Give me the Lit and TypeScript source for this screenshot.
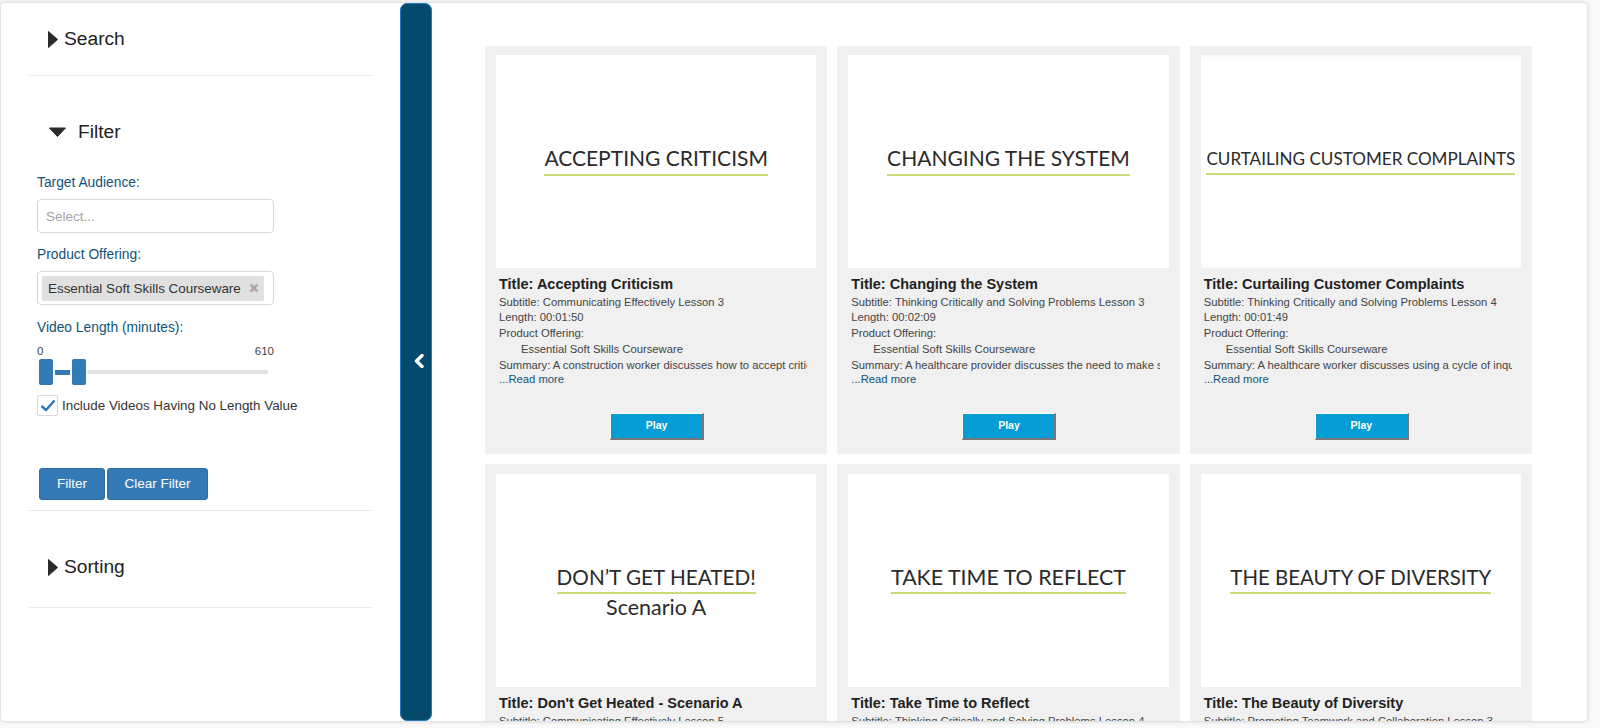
import { LitElement, html, css, nothing } from 'lit';
import { customElement } from 'lit/decorators.js';

interface Video {
  poster: string;
  scenario?: string;
  fontSize: number;
  gap: number;
  letterbox?: boolean;
  title: string;
  subtitle: string;
  length: string;
  summary: string;
}

const VIDEOS: Video[] = [
  {
    poster: 'ACCEPTING CRITICISM',
    fontSize: 21,
    gap: 3,
    title: 'Accepting Criticism',
    subtitle: 'Communicating Effectively Lesson 3',
    length: '00:01:50',
    summary: 'A construction worker discusses how to accept criticism from a supervisor on the job.',
  },
  {
    poster: 'CHANGING THE SYSTEM',
    fontSize: 21,
    gap: 3,
    title: 'Changing the System',
    subtitle: 'Thinking Critically and Solving Problems Lesson 3',
    length: '00:02:09',
    summary: 'A healthcare provider discusses the need to make system changes in the workplace.',
  },
  {
    poster: 'CURTAILING CUSTOMER COMPLAINTS',
    fontSize: 17.1,
    gap: 1,
    letterbox: true,
    title: 'Curtailing Customer Complaints',
    subtitle: 'Thinking Critically and Solving Problems Lesson 4',
    length: '00:01:49',
    summary: 'A healthcare worker discusses using a cycle of inquiry to reduce complaints.',
  },
  {
    poster: 'DON’T GET HEATED!',
    scenario: 'Scenario A',
    fontSize: 20.7,
    gap: 2,
    title: "Don't Get Heated - Scenario A",
    subtitle: 'Communicating Effectively Lesson 5',
    length: '00:01:30',
    summary: '',
  },
  {
    poster: 'TAKE TIME TO REFLECT',
    fontSize: 21.4,
    gap: 2,
    title: 'Take Time to Reflect',
    subtitle: 'Thinking Critically and Solving Problems Lesson 4',
    length: '00:01:30',
    summary: '',
  },
  {
    poster: 'THE BEAUTY OF DIVERSITY',
    fontSize: 20.4,
    gap: 2,
    title: 'The Beauty of Diversity',
    subtitle: 'Promoting Teamwork and Collaboration Lesson 3',
    length: '00:01:30',
    summary: '',
  },
];

@customElement('app-root')
export class AppRoot extends LitElement {
  static styles = css`
    :host {
      display: block;
      height: 728px;
      overflow: hidden;
      background: #f9f9f9;
      font-family: 'Liberation Sans', Arial, sans-serif;
      color: #333;
    }

    .window {
      display: flex;
      height: 718px;
      margin: 3px 13px 0 1px;
      background: #fff;
      border-radius: 4px;
      box-shadow: 0 0 4px rgba(0, 0, 0, 0.22);
      overflow: hidden;
    }

    /* ===== Sidebar ===== */
    .sidebar {
      flex: 0 0 399px;
      box-sizing: border-box;
      padding: 0 28px;
    }

    .section {
      width: 343px;
      border-bottom: 1px solid #e9e9e9;
    }

    .section--search { height: 73px; padding-top: 24px; box-sizing: border-box; }
    .section--filter { padding: 44px 0 10px; }
    .section--sorting { height: 97px; padding-top: 44px; box-sizing: border-box; }

    .heading {
      display: flex;
      align-items: center;
      height: 24px;
      padding-left: 19px;
      font-size: 19.2px;
      color: #222;
    }

    .heading svg { flex: none; margin-right: 6px; }
    .heading--open { padding-left: 20px; }
    .heading--open svg { margin-right: 12px; }

    .form { padding-left: 8px; }

    .label {
      height: 20px;
      line-height: 20px;
      font-size: 13.8px;
      color: #0f5578;
    }

    .label--first { margin-top: 29px; }
    .label--next { margin-top: 12px; }
    .label--slider { margin-top: 13px; }

    .box {
      display: flex;
      align-items: center;
      box-sizing: border-box;
      width: 237px;
      height: 34px;
      margin-top: 6px;
      border: 1px solid #d9d9d9;
      border-radius: 4px;
      background: #fff;
    }

    .placeholder {
      padding-left: 8px;
      font-size: 13.5px;
      color: #a3a3a3;
    }

    .tag {
      display: flex;
      align-items: center;
      justify-content: space-between;
      box-sizing: border-box;
      width: 222px;
      height: 25px;
      margin-left: 4px;
      padding: 0 5px 0 6px;
      background: #e0e0e0;
      border-radius: 2px;
      font-size: 13.4px;
      color: #333;
    }

    .ticks {
      display: flex;
      justify-content: space-between;
      width: 237px;
      height: 14px;
      margin-top: 6px;
      line-height: 14px;
      font-size: 11.5px;
      color: #444;
    }

    .slider {
      display: flex;
      align-items: center;
      height: 26px;
      margin: 1px 0 0 2px;
    }

    .handle {
      flex: none;
      box-sizing: border-box;
      width: 13.5px;
      height: 26px;
      background: #337ab7;
      border-radius: 2px;
    }

    .connect {
      flex: none;
      width: 15.5px;
      height: 5px;
      margin: 0 2px;
      background: #337ab7;
    }

    .track {
      flex: none;
      width: 181px;
      height: 4px;
      margin-left: 1px;
      background: #e2e2e2;
      border-radius: 2px;
    }

    .check {
      display: flex;
      align-items: center;
      height: 21px;
      margin-top: 10px;
      font-size: 13.4px;
      color: #333;
    }

    .check-box {
      display: flex;
      align-items: center;
      justify-content: center;
      box-sizing: border-box;
      width: 21px;
      height: 21px;
      margin-right: 4px;
      border: 1px solid #d9d9d9;
      border-radius: 2px;
    }

    .actions {
      display: flex;
      gap: 2px;
      margin: 52px 0 0 2px;
    }

    .btn {
      box-sizing: border-box;
      height: 32px;
      padding: 0 0 2px;
      border: 1px solid #2e6da4;
      border-radius: 3px;
      background: #337ab7;
      font: 13.5px 'Liberation Sans', Arial, sans-serif;
      color: #fff;
    }

    .btn--filter { width: 66px; }
    .btn--clear { width: 101px; }

    /* ===== Collapse bar ===== */
    .toggle {
      flex: 0 0 32px;
      display: flex;
      align-items: center;
      justify-content: center;
      box-sizing: border-box;
      height: 718px;
      padding: 0 0 3px 6px;
      background: #054a6c;
      border: 1.5px solid #1a7cc0;
      border-radius: 7px;
    }

    /* ===== Video grid ===== */
    .main {
      flex: 1;
      min-width: 0;
      overflow: hidden;
      padding: 43px 55px 0 53px;
    }

    .grid {
      display: grid;
      grid-template-columns: repeat(3, 1fr);
      grid-auto-rows: 408px;
      gap: 10px;
    }

    .card {
      display: flex;
      flex-direction: column;
      box-sizing: border-box;
      min-width: 0;
      padding: 9px 11px 14px;
      background: #f0f0f0;
    }

    .card:nth-child(n + 4) { padding-top: 10px; }

    .poster {
      flex: none;
      display: grid;
      grid-template-rows: 1fr auto 1fr;
      justify-items: center;
      box-sizing: border-box;
      height: 213px;
      padding-bottom: 3px;
      background: #fff;
      font-family: Lato, 'Liberation Sans', sans-serif;
      color: #2a2a2a;
    }

    .poster--letterbox {
      border-top: 4px solid #fbfbfb;
      border-bottom: 4px solid #fbfbfb;
    }

    .poster-title {
      grid-row: 2;
      line-height: 26px;
      white-space: nowrap;
      border-bottom: 2px solid #c9dc7c;
    }

    .poster-sub {
      grid-row: 3;
      margin-top: 2px;
      font-size: 21.5px;
      line-height: 22px;
    }

    .info {
      padding: 7px 9px 0 3px;
      min-width: 0;
    }

    .title {
      height: 18px;
      margin-bottom: 1.5px;
      line-height: 18px;
      font-size: 14.5px;
      font-weight: 700;
      color: #222;
      white-space: nowrap;
    }

    .line {
      height: 15.75px;
      line-height: 15.75px;
      font-size: 11.25px;
      color: #444;
      white-space: nowrap;
      overflow: hidden;
    }

    .line--indent { padding-left: 22px; }

    .more {
      display: block;
      margin-top: -2.5px;
      line-height: 16px;
      font-size: 11.25px;
      color: #0f5578;
    }

    .play {
      display: block;
      box-sizing: border-box;
      width: 94px;
      height: 27px;
      margin: auto 0 0 calc(50% - 46px);
      padding: 0 0 2px;
      background: #069dd6;
      border: solid #fff;
      border-width: 1px 2px 2px 1px;
      border-right-color: #777;
      border-bottom-color: #777;
      font: 700 10.5px 'Liberation Sans', Arial, sans-serif;
      color: #fff;
    }
  `;

  private _renderCard(v: Video) {
    return html`
      <div class="card">
        <div class="poster ${v.letterbox ? 'poster--letterbox' : ''}">
          <div
            class="poster-title"
            style="font-size:${v.fontSize}px;padding-bottom:${v.gap}px"
          >${v.poster}</div>
          ${v.scenario ? html`<div class="poster-sub">${v.scenario}</div>` : nothing}
        </div>
        <div class="info">
          <div class="title">Title: ${v.title}</div>
          <div class="line">Subtitle: ${v.subtitle}</div>
          <div class="line">Length: ${v.length}</div>
          <div class="line">Product Offering:</div>
          <div class="line line--indent">Essential Soft Skills Courseware</div>
          <div class="line">Summary: ${v.summary}</div>
          <span class="more">...Read more</span>
        </div>
        <button class="play">Play</button>
      </div>
    `;
  }

  render() {
    const caretRight = html`<svg width="10" height="17" viewBox="0 0 10 17">
      <path d="M0.5 0.5 L9.5 8.5 L0.5 16.5 Z" fill="#2b2b2b" stroke="#2b2b2b" stroke-linejoin="round"/>
    </svg>`;

    return html`
      <div class="window">
        <aside class="sidebar">
          <div class="section section--search">
            <div class="heading">${caretRight}Search</div>
          </div>

          <div class="section section--filter">
            <div class="heading heading--open">
              <svg width="17" height="10" viewBox="0 0 17 10">
                <path d="M0.5 1 L16.5 1 L8.5 9.5 Z" fill="#2b2b2b" stroke="#2b2b2b" stroke-linejoin="round"/>
              </svg>Filter
            </div>
            <div class="form">
              <div class="label label--first">Target Audience:</div>
              <div class="box"><span class="placeholder">Select...</span></div>
              <div class="label label--next">Product Offering:</div>
              <div class="box">
                <div class="tag">
                  <span>Essential Soft Skills Courseware</span>
                  <svg width="10" height="10" viewBox="0 0 10 10">
                    <path d="M1.5 1.5 L8.5 8.5 M8.5 1.5 L1.5 8.5" stroke="#a8a8a8" stroke-width="2.6"/>
                  </svg>
                </div>
              </div>
              <div class="label label--slider">Video Length (minutes):</div>
              <div class="ticks"><span>0</span><span>610</span></div>
              <div class="slider">
                <div class="handle"></div>
                <div class="connect"></div>
                <div class="handle"></div>
                <div class="track"></div>
              </div>
              <div class="check">
                <div class="check-box">
                  <svg width="16" height="13" viewBox="0 0 16 13">
                    <path d="M1.5 7 L6 11 L14.5 1.5" fill="none" stroke="#2a7bbd" stroke-width="2.4"/>
                  </svg>
                </div>
                Include Videos Having No Length Value
              </div>
              <div class="actions">
                <button class="btn btn--filter">Filter</button>
                <button class="btn btn--clear">Clear Filter</button>
              </div>
            </div>
          </div>

          <div class="section section--sorting">
            <div class="heading">${caretRight}Sorting</div>
          </div>
        </aside>

        <div class="toggle">
          <svg width="10" height="14" viewBox="0 0 10 14">
            <path d="M8 1.5 L2.5 7 L8 12.5" fill="none" stroke="#fff" stroke-width="3.4" stroke-linecap="round" stroke-linejoin="round"/>
          </svg>
        </div>

        <main class="main">
          <div class="grid">${VIDEOS.map((v) => this._renderCard(v))}</div>
        </main>
      </div>
    `;
  }
}

declare global {
  interface HTMLElementTagNameMap {
    'app-root': AppRoot;
  }
}
